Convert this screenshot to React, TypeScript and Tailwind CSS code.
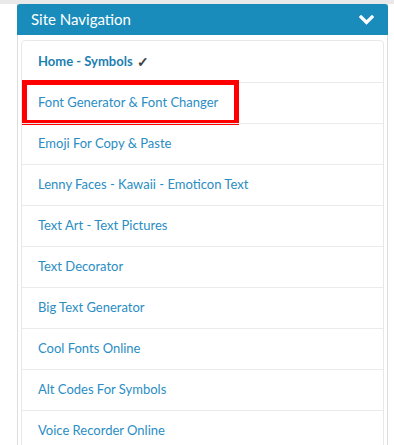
import React from 'react';

const links = [
  'Font Generator & Font Changer',
  'Emoji For Copy & Paste',
  'Lenny Faces - Kawaii - Emoticon Text',
  'Text Art - Text Pictures',
  'Text Decorator',
  'Big Text Generator',
  'Cool Fonts Online',
  'Alt Codes For Symbols',
  'Voice Recorder Online',
];

const App: React.FC = () => {
  return (
    <div className="w-[394px] h-[445px] overflow-hidden bg-white" style={{ fontFamily: 'Lato, "Open Sans", sans-serif' }}>
      <div className="h-[4px] bg-[#e9e9e9]" />
      <div className="ml-[17px] w-[371px] border-x border-[#dddddd]">
        <div className="h-[31px] -mx-px bg-[#1a8cbc] rounded-t-[3px] flex items-center justify-between pl-[14px] pr-[14px]">
          <span className="text-white text-[15px] leading-none">Site Navigation</span>
          <svg width="15" height="10" viewBox="0 0 15 10">
            <polyline points="2,2 7.5,7.5 13,2" fill="none" stroke="white" strokeWidth="3.2" strokeLinecap="square" />
          </svg>
        </div>
        <div className="px-[3px] pt-[5px]">
          <ul className="border border-[#e8e8e8] rounded-[4px]">
            <li className="h-[41px] flex items-center px-4 text-[13px] font-bold text-[#1d7fb1]">
              Home - Symbols <span className="ml-1 text-[14px] text-[#444444] font-bold">✓</span>
            </li>
            {links.map((l, i) => (
              <li key={l} className="relative h-[41px] flex items-center px-4 border-t border-[#ebebeb] text-[13px] text-[#2a8dc3]">
                {l}
                {i === 0 && (
                  <div className="absolute left-0 top-[-3px] w-[217px] h-[45px] border-[5px] border-[#ff0000]" />
                )}
              </li>
            ))}
          </ul>
        </div>
      </div>
    </div>
  );
};

export default App;
